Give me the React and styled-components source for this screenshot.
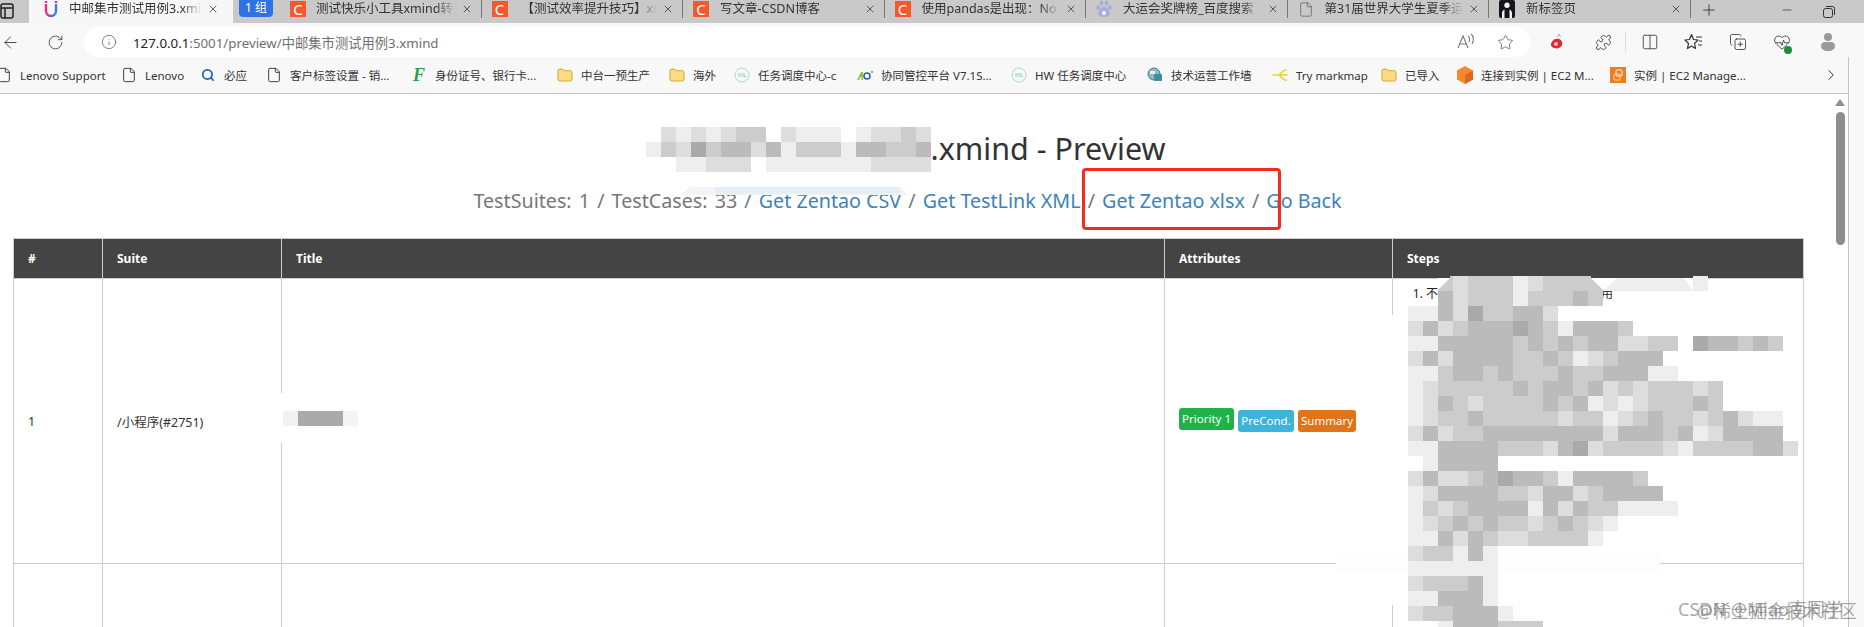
import React from 'react';
import styled, { createGlobalStyle } from 'styled-components';
import { ArrowLeft, ChevronRight, Columns2, CopyPlus, File, HeartPulse, Info, Minus, Plus, Puzzle, RotateCw, Search, Star, X } from 'lucide-react';

const UI_FONT = '"Noto Sans", "Noto Sans CJK SC", sans-serif';

const GlobalStyle = createGlobalStyle`
  html, body {
    margin: 0;
    height: 100%;
    background: #fff;
    overflow: hidden;
  }
  * {
    box-sizing: border-box;
  }
`;

const Page = styled.div`
  position: relative;
  display: flex;
  flex-direction: column;
  height: 627px;
  overflow: hidden;
  font-family: ${UI_FONT};
  color: #333;
`;

const TabStrip = styled.div`
  display: flex;
  flex: none;
  align-items: stretch;
  height: 23px;
  background: #c9c9c9;
`;

const WindowIcon = styled.div`
  flex: none;
  width: 29px;
  padding-top: 2px;
  color: #222;
`;

const ActiveTab = styled.div`
  display: flex;
  flex: none;
  align-items: center;
  width: 204px;
  padding: 0 14px 5px 14px;
  background: #f7f7f7;
`;

const GroupChip = styled.div`
  flex: none;
  width: 34px;
  height: 17px;
  margin: 0 7px 0 6px;
  border-radius: 0 0 4px 4px;
  background: #2f72e4;
  color: #fff;
  font-size: 12px;
  line-height: 16px;
  text-align: center;
`;

const Tab = styled.div`
  display: flex;
  flex: none;
  align-items: center;
  width: 201.5px;
  height: 18px;
  padding: 0 8px 0 10px;
  border-right: 1px solid #777;
`;

const TabTitle = styled.span`
  flex: 1;
  min-width: 0;
  margin-left: ${p => p.$indent || 11}px;
  overflow: hidden;
  white-space: nowrap;
  font-size: 12.5px;
  line-height: 18px;
  color: #333;
  mask-image: linear-gradient(to right, #000 85%, transparent 100%);
`;

const Favicon = styled.span`
  display: flex;
  flex: none;
  align-items: center;
  justify-content: center;
  width: 16px;
  height: 16px;
`;

const CsdnIcon = styled(Favicon)`
  background: #f4592d;
  color: #fff;
  font-size: 15px;
  line-height: 16px;
`;

const CloseIcon = styled(X)`
  flex: none;
  width: 12px;
  height: 12px;
  margin-left: 5px;
  color: #333;
`;

const WindowButtons = styled.div`
  display: flex;
  flex: 1;
  align-items: flex-start;
  padding-top: 1px;
  color: #333;
`;

const NewTab = styled.span`
  margin-left: 9px;
  margin-right: 62px;
`;

const RestoreBtn = styled.span`
  margin-left: 29px;
`;

const Toolbar = styled.div`
  display: flex;
  flex: none;
  align-items: flex-start;
  height: 34px;
  padding-top: 4px;
  background: #f8f8f8;
`;

const ToolSlot = styled.span`
  display: flex;
  flex: none;
  align-items: center;
  justify-content: center;
  position: relative;
  width: ${p => p.$w || 44}px;
  height: 30px;
  margin-left: ${p => p.$ml || 0}px;
  color: #444;
`;

const AddressBar = styled.div`
  display: flex;
  flex: none;
  align-items: center;
  width: 1446px;
  height: 30px;
  margin: 0 5px 0 17px;
  padding: 0 16px 0 17px;
  background: #fff;
  border-radius: 15px;
  color: #666;
`;

const Url = styled.div`
  flex: 1;
  margin-left: 16px;
  font-size: 13.3px;
  color: #6f6f6f;
  white-space: nowrap;
  b {
    font-weight: 400;
    color: #222;
  }
`;

const ReadAloud = styled.span`
  margin-right: 22px;
  display: flex;
`;

const ToolSep = styled.span`
  flex: none;
  width: 1px;
  height: 20px;
  margin-top: 5px;
  background: #ddd;
`;

const HealthDot = styled.span`
  position: absolute;
  right: 12px;
  bottom: 3px;
  width: 8px;
  height: 8px;
  border-radius: 50%;
  background: #1c8c3c;
`;

const Lower = styled.div`
  display: flex;
  flex: 1;
  min-height: 0;
`;

const Browser = styled.div`
  display: flex;
  flex-direction: column;
  flex: none;
  width: 1849px;
  border-right: 1px solid #c4c4c4;
`;

const SidePanel = styled.div`
  flex: 1;
  background: #f8f8f8;
`;

const Bookmarks = styled.div`
  display: flex;
  flex: none;
  align-items: center;
  height: 37px;
  background: #f8f8f8;
  border-bottom: 1px solid #c4c4c4;
`;

const Bookmark = styled.div`
  display: flex;
  flex: none;
  align-items: center;
  gap: 8px;
  margin-left: ${p => (p.$first ? -4 : 17)}px;
`;

const BookmarkLabel = styled.span`
  display: block;
  width: ${p => p.$w}px;
  overflow: visible;
  white-space: nowrap;
  font-size: 11.5px;
  color: #333;
`;

const LogoText = styled.span`
  display: block;
  width: 16px;
  text-align: center;
  color: #2aa14a;
  font: italic 700 18px/16px "Liberation Serif", serif;
`;

const MoreChevron = styled(ChevronRight)`
  margin-left: auto;
  margin-right: 8px;
  color: #333;
`;

const Viewport = styled.div`
  display: flex;
  flex: 1;
  min-height: 0;
  background: #fff;
`;

const Content = styled.main`
  position: relative;
  flex: 1;
  min-width: 0;
  overflow: hidden;
`;

const Heading = styled.h1`
  display: flex;
  align-items: center;
  justify-content: center;
  width: 1789px;
  height: 46px;
  margin: 32px 0 0 13px;
  padding-right: 4px;
  font-size: 30.5px;
  font-weight: 400;
  color: #333;
  span {
    margin-bottom: 3px;
  }
`;

const SubHeading = styled.p`
  width: 1789px;
  margin: 16px 0 0 13px;
  font-size: 19.7px;
  word-spacing: 2px;
  line-height: 26px;
  text-align: center;
  color: #777;
  white-space: nowrap;
`;

const SubLink = styled.a`
  color: #3e82b8;
  text-decoration: none;
  word-spacing: 0;
`;

const CaseTable = styled.table`
  width: 1790px;
  margin: 24px 0 0 13px;
  border-collapse: collapse;
  table-layout: fixed;
  font-size: 12.5px;
  color: #333;
`;

const HeadCell = styled.th`
  height: 40px;
  padding: 0 14px;
  background: #444;
  border: 1px solid #ccc;
  color: #fff;
  font-weight: 700;
  font-size: 12px;
  text-align: left;
`;

const Cell = styled.td`
  height: ${p => p.$h || 285}px;
  padding: ${p => (p.$top ? '6px 14px 0' : '0 14px')};
  border: 1px solid #ccc;
  vertical-align: ${p => (p.$top ? 'top' : 'middle')};
`;

const TagRow = styled.div`
  display: flex;
  align-items: center;
  gap: 4px;
`;

const CellTag = styled.span`
  flex: none;
  width: ${p => p.$w}px;
  height: 22px;
  margin-bottom: ${p => (p.$raised ? '4px' : '0')};
  border-radius: 3px;
  background: ${p => p.$color};
  color: #fff;
  font-size: 11.5px;
  line-height: 21px;
  text-align: center;
  white-space: nowrap;
`;

const StepList = styled.ol`
  margin: 0;
  padding-left: 19px;
  white-space: nowrap;
  font-size: 12px;
  line-height: 18px;
  color: #222;
`;

const HiddenGap = styled.span`
  display: inline-block;
  width: 163px;
`;

const Overlay = styled.svg`
  position: absolute;
  left: 0;
  top: 0;
  pointer-events: none;
`;

const OutlineBox = styled.div`
  position: absolute;
  left: 1082px;
  top: 74px;
  width: 199px;
  height: 62px;
  border: 3px solid #f32a22;
  border-radius: 4px;
  pointer-events: none;
`;

const Watermark = styled.div`
  position: absolute;
  right: ${p => p.$right}px;
  bottom: ${p => p.$bottom}px;
  font-size: 18px;
  line-height: 20px;
  white-space: nowrap;
  color: rgba(110, 110, 110, 0.6);
`;

const Scrollbar = styled.div`
  display: flex;
  flex: none;
  flex-direction: column;
  align-items: center;
  width: 16px;
  padding-top: 5px;
`;

const ScrollArrow = styled.div`
  width: 0;
  height: 0;
  border-left: 5px solid transparent;
  border-right: 5px solid transparent;
  border-bottom: 7px solid #8e8e8e;
`;

const ScrollThumb = styled.div`
  width: 9px;
  height: 133px;
  margin-top: 6px;
  border-radius: 5px;
  background: #8e8e8e;
`;

// pixelated blocks, one char per 15px cell, the char is the grey level
function mosaicRects(rows, x0, y0, cell = 15) {
  const out = [];
  rows.forEach((row, r) => {
    [...row].forEach((c, i) => {
      if (c === '.') return;
      out.push(<rect key={`${x0}-${r}-${i}`} x={x0 + i * cell} y={y0 + r * cell} width={cell} height={cell} fill={`#${c}${c}${c}`} />);
    });
  });
  return out;
}

const NAME_ROWS = [
  'fdededccfdeeefeddcd',
  'ecdacbbdbecccebbccb',
  '.feedddfeeeeeeedddd',
];

const STEP_ROWS = [
  '..cdcccedcccc.eeeeee',
  '..bdcccecccbc',
  'eebdaccbbd',
  'dbdcbbbabcebbbc',
  'eebbbbbcbcbcbbddccfabbcbc',
  'dbdbbbbccbcedcbbb',
  'eecbbcbcccbccbbbee',
  'edcccccbcbbcbdcdcccdc',
  'edbcdccccbcbededcccbc',
  'edccbcccccdccedcbccdcbdee',
  'dbdccbbbbbbbbdbbbcbedbbbb',
  'eebbbbcccdbadccccdeccccbbd',
  '.ebbbb',
  'dbddcbabbcebbbbc',
  'edbbbbccdbbdcbbbb',
  'ecdcbbbbebdbcceeee',
  'edcbcbccdcbcde',
  'eebdbcddcccce',
  'dccebe',
  'eeeeee',
  'dcccbe',
  'eebbbe',
  'dccbbbe',
  '..ebbbccc',
];

const TITLE_ROW = ['.aaa.'];

function CoverOverlay() {
  // page coordinates: the viewBox skips the 94px of browser chrome above the content
  return (
    <Overlay width="1832" height="533" viewBox="0 94 1832 533">
      <polygon points="680,195 690,187 900,187 908,195" fill="#f1f5f8" />
      <rect x="715" y="187" width="185" height="7" fill="#e6eff6" />
      <rect x="268" y="393" width="92" height="50" fill="#fff" />
      {mosaicRects(TITLE_ROW, 283, 411)}
      <rect x="283" y="411" width="15" height="15" fill="#f2f2f2" />
      <rect x="343" y="411" width="15" height="15" fill="#f2f4f6" />
      <rect x="1382" y="315" width="24" height="290" fill="#fff" />
      <rect x="1336" y="553" width="324" height="20" fill="#fdfdfd" />
      {mosaicRects(STEP_ROWS, 1408, 276)}
      <polygon points="1438,278 1438,290 1450,278" fill="#fff" />
      <rect x="1438" y="276" width="12" height="2" fill="#444" />
      <polygon points="1603,278 1603,290 1591,278" fill="#fff" />
      <rect x="1591" y="276" width="12" height="2" fill="#444" />
      <rect x="1603" y="276" width="15" height="15" fill="#fff" />
      <polygon points="1603,291 1618,291 1618,278" fill="#eee" />
      <rect x="1603" y="276" width="90" height="2" fill="#444" />
      <polygon points="1693,278 1693,291 1684,278" fill="#fff" />
      <polygon points="1408,621 1408,627 1420,627" fill="#fff" />
    </Overlay>
  );
}

function TitleMosaic() {
  return (
    <svg width="285" height="45" style={{ flex: 'none' }} viewBox="643 126 285 45">
      {mosaicRects(NAME_ROWS, 643, 126)}
    </svg>
  );
}

const DocIcon = () => <File size={16} strokeWidth={1.4} color="#333" />;

const FolderIcon = () => (
  <svg width="16" height="16" viewBox="0 0 16 16">
    <path d="M1 3.5C1 2.7 1.7 2 2.5 2h3.2l1.5 1.7h6.3c.8 0 1.5.7 1.5 1.5v7.3c0 .8-.7 1.5-1.5 1.5h-11C1.7 14 1 13.3 1 12.5z" fill="#fbdc83" stroke="#d5a52c" strokeWidth="1" />
  </svg>
);

const XxlIcon = () => (
  <svg width="16" height="16" viewBox="0 0 16 16">
    <circle cx="8" cy="8" r="7" fill="#f3faf7" stroke="#b5d6c8" />
    <text x="8" y="10" fontSize="5" textAnchor="middle" fill="#8ab5a3">XXL</text>
  </svg>
);

const AbIcon = () => (
  <svg width="16" height="16" viewBox="0 0 16 16">
    <path d="M0 13 4 5h2v8H4.500V10H3.500L2 13z" fill="#8cc63f" />
    <circle cx="10" cy="9" r="3" fill="none" stroke="#2b5fa8" strokeWidth="1.5" />
    <circle cx="15" cy="5" r="1" fill="#888" />
  </svg>
);

const OpsIcon = () => (
  <svg width="16" height="16" viewBox="0 0 16 16">
    <circle cx="7" cy="7" r="6" fill="#8fb8c4" stroke="#4a7d8c" />
    <rect x="7" y="7" width="8" height="7" rx="1" fill="#3d8f9e" />
    <path d="M3 4h5v3H3z" fill="#e6f0f2" />
  </svg>
);

const MarkmapIcon = () => (
  <svg width="18" height="16" viewBox="0 0 18 16" fill="none" stroke="#e6d62f" strokeWidth="1.700" strokeLinecap="round">
    <path d="M1 8h16M8 8c2-1 3-5 8-6M8 8c2 1 3 5 8 6" />
  </svg>
);

const CubeIcon = () => (
  <svg width="16" height="18" viewBox="0 0 16 18">
    <path d="M8 0 16 4.500v9L8 18 0 13.500v-9z" fill="#f58a2a" />
    <path d="M8 9v9l8-4.500v-9z" fill="#e0661a" />
  </svg>
);

const Ec2Icon = () => (
  <svg width="16" height="16" viewBox="0 0 16 16" fill="none">
    <rect width="16" height="16" fill="#ee7d1f" />
    <rect x="6" y="3" width="6" height="6" rx="1" stroke="#fff" />
    <rect x="4" y="7" width="6" height="6" rx="1" stroke="#ffd9b0" />
  </svg>
);

const MagnetIcon = () => (
  <svg width="16" height="18" viewBox="0 0 16 18" fill="none" strokeWidth="2.400" strokeLinecap="butt">
    <path d="M3 4v7a5 5 0 0 0 5 5" stroke="#e0308f" />
    <path d="M13 4v7a5 5 0 0 1-5 5" stroke="#3c7fe0" />
    <path d="M3 1v2M13 1v2" stroke="#e0308f" />
  </svg>
);

const BaiduIcon = () => (
  <svg width="16" height="18" viewBox="0 0 16 18" fill="#a9a6e4">
    <ellipse cx="5.500" cy="3" rx="1.800" ry="2.500" />
    <ellipse cx="10.500" cy="3" rx="1.800" ry="2.500" />
    <ellipse cx="2" cy="7.500" rx="1.800" ry="2.300" />
    <ellipse cx="14" cy="7.500" rx="1.800" ry="2.300" />
    <path d="M8 7c-3 0-6 4-5.500 7 .4 2.500 3.500 3 5.500 2.500 2 .5 5.100 0 5.500-2.500C14 11 11 7 8 7z" />
    <circle cx="8" cy="13" r="2.200" fill="#eeeef8" />
  </svg>
);

const PortraitIcon = () => (
  <svg width="16" height="18" viewBox="0 0 16 18">
    <rect width="16" height="18" rx="2" fill="#15151c" />
    <path d="M8 2.500a2.800 2.800 0 1 1-.01 0zM3 18v-5c0-1.500 1-3 2.500-3.500V18zM13 18v-5c0-1.500-1-3-2.500-3.500V18z" fill="#f2f2f2" />
  </svg>
);

const WindowGlyph = () => (
  <svg width="14" height="16" viewBox="0 0 14 16" fill="none" stroke="#222" strokeWidth="1.500">
    <rect x="1" y="1" width="12" height="14" rx="2" />
    <path d="M1 5h12M5 5v10" />
  </svg>
);

const RestoreGlyph = () => (
  <svg width="12" height="12" viewBox="0 0 12 12" fill="none" stroke="#333">
    <rect x="0.500" y="2.500" width="9" height="9" rx="2" />
    <path d="M3 .5h6.500a2 2 0 0 1 2 2V9" />
  </svg>
);

const ReadAloudGlyph = () => (
  <svg width="18" height="18" viewBox="0 0 18 18" fill="none" stroke="#777" strokeWidth="1.100">
    <path d="M1 15 6 3l5 12M3 11h6" />
    <path d="M11 3c2 1 2 4 1 6M14 1c3 2 3 7 1 10" />
  </svg>
);

const RedExtension = () => (
  <svg width="14" height="18" viewBox="0 0 14 18">
    <path d="M6 6c4-1 7 2 6 6-1 3-5 4-8 3S0 11 2 9c1-2 2-3 4-3z" fill="#e8232f" />
    <circle cx="6" cy="11" r="2" fill="#fff" opacity=".7" />
    <path d="M9 1 7.500 4M9 1l1.500 3" stroke="#aaa" fill="none" />
  </svg>
);

const FavoritesGlyph = () => (
  <svg width="20" height="18" viewBox="0 0 20 18" fill="none" stroke="#333" strokeWidth="1.200" strokeLinejoin="round">
    <path d="M7.500 1.500 9.500 6.500 14 7 10.500 10.500 11.500 15.500 7.500 13 3.500 15.500 4.500 10.500 1 7 5.500 6.500z" />
    <path d="M12 4h6M15 8h3M14 12h4" />
  </svg>
);

const ProfileGlyph = () => (
  <svg width="16" height="20" viewBox="0 0 16 20" fill="#9a9a9a">
    <circle cx="8" cy="5" r="4" />
    <path d="M1 14c0-2.500 2-4 4-4h6c2 0 4 1.500 4 4 0 3-3 5-7 5s-7-2-7-5z" />
  </svg>
);

const TABS = [
  { title: '测试快乐小工具xmind转视图', csdn: true, lead: 10 },
  { title: '【测试效率提升技巧】xmind', csdn: true, lead: 14 },
  { title: '写文章-CSDN博客', csdn: true, lead: 11 },
  { title: '使用pandas是出现：No module', csdn: true, lead: 11 },
  { title: '大运会奖牌榜_百度搜索', icon: <BaiduIcon />, lead: 11 },
  { title: '第31届世界大学生夏季运动会', icon: <File size={17} strokeWidth={1} color="#555" />, lead: 11 },
  { title: '新标签页', icon: <PortraitIcon />, lead: 11 },
];

const BOOKMARKS = [
  { label: 'Lenovo Support', w: 84, icon: <DocIcon /> },
  { label: 'Lenovo', w: 38, icon: <DocIcon /> },
  { label: '必应', w: 25, icon: <Search size={14} strokeWidth={3} color="#1769c4" /> },
  { label: '客户标签设置 - 销...', w: 104, icon: <DocIcon /> },
  { label: '身份证号、银行卡...', w: 105, icon: <LogoText>F</LogoText> },
  { label: '中台一预生产', w: 71, icon: <FolderIcon /> },
  { label: '海外', w: 24, icon: <FolderIcon /> },
  { label: '任务调度中心-c', w: 82, icon: <XxlIcon /> },
  { label: '协同管控平台 V7.1S...', w: 113, icon: <AbIcon /> },
  { label: 'HW 任务调度中心', w: 95, icon: <XxlIcon /> },
  { label: '技术运营工作墙', w: 84, icon: <OpsIcon /> },
  { label: 'Try markmap', w: 68, icon: <MarkmapIcon /> },
  { label: '已导入', w: 35, icon: <FolderIcon /> },
  { label: '连接到实例 | EC2 M...', w: 112, icon: <CubeIcon /> },
  { label: '实例 | EC2 Manage...', w: 108, icon: <Ec2Icon /> },
];

const COLUMNS = [
  ['#', 89],
  ['Suite', 179],
  ['Title', 883],
  ['Attributes', 228],
  ['Steps', 411],
];

export default function App() {
  return (
    <Page>
      <GlobalStyle />
      <TabStrip>
        <WindowIcon>
          <WindowGlyph />
        </WindowIcon>
        <ActiveTab>
          <Favicon>
            <MagnetIcon />
          </Favicon>
          <TabTitle $indent={10}>中邮集市测试用例3.xmind</TabTitle>
          <CloseIcon strokeWidth={1.5} />
        </ActiveTab>
        <GroupChip>1 组</GroupChip>
        {TABS.map(tab => (
          <Tab key={tab.title}>
            {tab.csdn ? <CsdnIcon>C</CsdnIcon> : <Favicon>{tab.icon}</Favicon>}
            <TabTitle $indent={tab.lead}>{tab.title}</TabTitle>
            <CloseIcon strokeWidth={1.5} />
          </Tab>
        ))}
        <WindowButtons>
          <NewTab>
            <Plus size={18} strokeWidth={1.2} />
          </NewTab>
          <Minus size={14} strokeWidth={1.2} style={{ marginTop: 2 }} />
          <RestoreBtn>
            <RestoreGlyph />
          </RestoreBtn>
        </WindowButtons>
      </TabStrip>

      <Toolbar>
        <ToolSlot $w={20}>
          <ArrowLeft size={19} strokeWidth={1.2} />
        </ToolSlot>
        <ToolSlot $w={24} $ml={23}>
          <RotateCw size={17} strokeWidth={1.2} />
        </ToolSlot>
        <AddressBar>
          <Info size={16} strokeWidth={1.2} />
          <Url>
            <b>127.0.0.1</b>:5001/preview/中邮集市测试用例3.xmind
          </Url>
          <ReadAloud>
            <ReadAloudGlyph />
          </ReadAloud>
          <Star size={17} strokeWidth={1.2} />
        </AddressBar>
        <ToolSlot>
          <RedExtension />
        </ToolSlot>
        <ToolSlot $ml={2}>
          <Puzzle size={17} strokeWidth={1.3} />
        </ToolSlot>
        <ToolSep />
        <ToolSlot $ml={2}>
          <Columns2 size={18} strokeWidth={1.2} />
        </ToolSlot>
        <ToolSlot>
          <FavoritesGlyph />
        </ToolSlot>
        <ToolSlot>
          <CopyPlus size={18} strokeWidth={1.2} />
        </ToolSlot>
        <ToolSlot>
          <HeartPulse size={18} strokeWidth={1.2} />
          <HealthDot />
        </ToolSlot>
        <ToolSlot $ml={2}>
          <ProfileGlyph />
        </ToolSlot>
      </Toolbar>

      <Lower>
        <Browser>
          <Bookmarks>
            {BOOKMARKS.map((item, i) => (
              <Bookmark key={item.label} $first={i === 0}>
                <Favicon>{item.icon}</Favicon>
                <BookmarkLabel $w={item.w}>{item.label}</BookmarkLabel>
              </Bookmark>
            ))}
            <MoreChevron size={18} strokeWidth={1.3} />
          </Bookmarks>
          <Viewport>
            <Content>
              <Heading>
                <TitleMosaic />
                <span>.xmind - Preview</span>
              </Heading>
              <SubHeading>
                TestSuites: 1 / TestCases: 33 / <SubLink>Get Zentao CSV</SubLink> / <SubLink>Get TestLink XML</SubLink> / <SubLink>Get Zentao xlsx</SubLink> / <SubLink>Go Back</SubLink>
              </SubHeading>
              <CaseTable>
                <colgroup>
                  {COLUMNS.map(([name, width]) => (
                    <col key={name} width={width} />
                  ))}
                </colgroup>
                <thead>
                  <tr>
                    {COLUMNS.map(([name]) => (
                      <HeadCell key={name}>{name}</HeadCell>
                    ))}
                  </tr>
                </thead>
                <tbody>
                  <tr>
                    <Cell>1</Cell>
                    <Cell>/小程序(#2751)</Cell>
                    <Cell />
                    <Cell>
                      <TagRow>
                        <CellTag $color="#1fb24a" $w={55} $raised>Priority 1</CellTag>
                        <CellTag $color="#3fb3d9" $w={56}>PreCond.</CellTag>
                        <CellTag $color="#e0741a" $w={58}>Summary</CellTag>
                      </TagRow>
                    </Cell>
                    <Cell $top>
                      <StepList>
                        <li>
                          不<HiddenGap />用
                        </li>
                      </StepList>
                    </Cell>
                  </tr>
                  <tr>
                    <Cell $h={200} />
                    <Cell $h={200} />
                    <Cell $h={200} />
                    <Cell $h={200} />
                    <Cell $h={200} />
                  </tr>
                </tbody>
              </CaseTable>
              <CoverOverlay />
              <OutlineBox />
            </Content>
            <Scrollbar>
              <ScrollArrow />
              <ScrollThumb />
            </Scrollbar>
          </Viewport>
        </Browser>
        <SidePanel />
      </Lower>
      <Watermark $right={21} $bottom={8}>CSDN @Miao南同学</Watermark>
      <Watermark $right={7} $bottom={6}>@稀土掘金技术社区</Watermark>
    </Page>
  );
}
